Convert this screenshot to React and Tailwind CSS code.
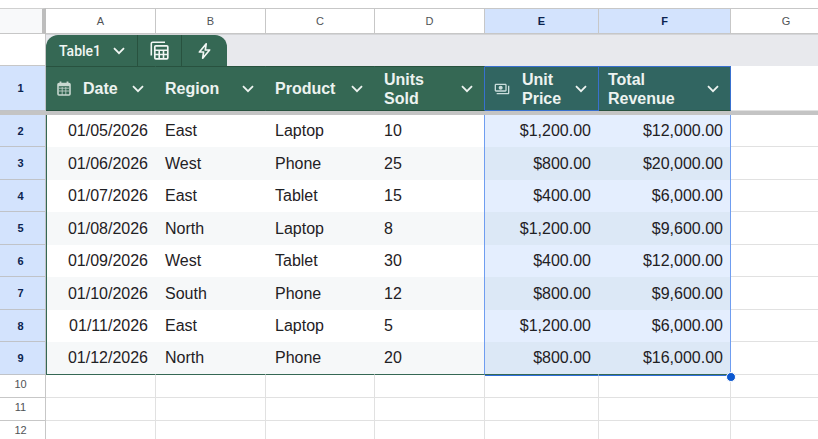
import React from 'react';
import { MdOutlinePayments } from 'react-icons/md';

const rows = [
  ['01/05/2026', 'East', 'Laptop', '10', '$1,200.00', '$12,000.00'],
  ['01/06/2026', 'West', 'Phone', '25', '$800.00', '$20,000.00'],
  ['01/07/2026', 'East', 'Tablet', '15', '$400.00', '$6,000.00'],
  ['01/08/2026', 'North', 'Laptop', '8', '$1,200.00', '$9,600.00'],
  ['01/09/2026', 'West', 'Tablet', '30', '$400.00', '$12,000.00'],
  ['01/10/2026', 'South', 'Phone', '12', '$800.00', '$9,600.00'],
  ['01/11/2026', 'East', 'Laptop', '5', '$1,200.00', '$6,000.00'],
  ['01/12/2026', 'North', 'Phone', '20', '$800.00', '$16,000.00'],
];

const letters = ['A', 'B', 'C', 'D', 'E', 'F', 'G'];
const emptyRows = [10, 11, 12];

const Chevron = () => (
  <svg viewBox="0 0 12 8" className="block h-2 w-3" fill="none" stroke="currentColor" strokeWidth="1.8">
    <path d="M1 1.2 6 6.2 11 1.2" />
  </svg>
);

const CalendarIcon = () => (
  <svg viewBox="0 0 14 15" className="h-[15px] w-3.5 shrink-0 text-[#c9d8d0]" fill="none" stroke="currentColor">
    <rect x="1" y="2.5" width="12" height="11.5" rx="1" strokeWidth="1.6" />
    <path d="M3.5 0.5v2.5M10.5 0.5v2.5" strokeWidth="1.8" />
    <path d="M1 4h12" strokeWidth="2.4" />
    <path d="M2 7.2h10M2 10h10M5.2 6v8M8.8 6v8" strokeWidth="0.8" />
  </svg>
);

const TableIcon = () => (
  <svg viewBox="0 0 19 19" className="h-[19px] w-[19px]" fill="none" stroke="currentColor">
    <path d="M1.3 14.5V2.6q0-1.3 1.3-1.3H15" strokeWidth="1.6" />
    <rect x="4.8" y="4.8" width="13" height="13" rx="1" strokeWidth="1.7" />
    <path d="M5 9.3h13M5 13.5h13M9.2 9.3v8.5M13.5 9.3v8.5" strokeWidth="1.6" />
  </svg>
);

const BoltIcon = () => (
  <svg viewBox="0 0 13 18" className="h-[18px] w-[13px]" fill="none" stroke="currentColor" strokeWidth="1.7" strokeLinejoin="round">
    <path d="M8.2 1.8 1.4 10h4.2l-.9 6.2L11.6 8H7.3z" />
  </svg>
);

const columns = [
  {
    label: 'Date',
    icon: <CalendarIcon />,
    look: 'border-t-[#28523f] border-r-transparent border-b-[#28523f] bg-[#356854]',
    inner: 'gap-3 pl-[11px]',
  },
  { label: 'Region', look: 'border-t-[#28523f] border-r-transparent border-b-[#28523f] bg-[#356854]', inner: 'pl-[9px]' },
  { label: 'Product', look: 'border-t-[#28523f] border-r-transparent border-b-[#28523f] bg-[#356854]', inner: 'pl-[9px]' },
  { label: 'Units Sold', look: 'border-t-[#28523f] border-r-[#3870cf] border-b-[#28523f] bg-[#356854]', inner: 'pl-[9px]' },
  {
    label: 'Unit Price',
    icon: <MdOutlinePayments className="h-4 w-4 shrink-0 text-[#c9dcdb]" />,
    look: 'border-t-[#3870cf] border-r-[#3870cf] border-b-[#3870cf] bg-[#316561]',
    inner: 'gap-3 pl-[9px]',
  },
  { label: 'Total Revenue', look: 'border-t-[#3870cf] border-r-[#3870cf] border-b-[#28523f] bg-[#316561]', inner: 'pl-[9px]' },
];

// borders and alignment of the data cells, one entry per column
const cellLook = [
  'border-r border-r-transparent border-l border-l-[#356854] pr-[7px] text-right',
  'border-r border-r-transparent pl-[9px]',
  'border-r border-r-transparent pl-[9px]',
  'border-r border-r-[#6f9df0] pl-[9px]',
  'border-r border-r-transparent pr-[7px] text-right',
  'border-r border-r-[#6f9df0] pr-[7px] text-right',
];

const cellBg = (row, col) => {
  if (col > 3) return row % 2 ? 'bg-[#dce8f6]' : 'bg-[#e4eefe]';
  return row % 2 ? 'bg-[#f6f8f9]' : 'bg-white';
};

const RowHeader = ({ n, selected }) => (
  <th
    scope="row"
    className={
      selected
        ? 'border-r border-b border-[#c0c3c8] bg-[#d3e3fd] py-0 pr-1 pl-0 text-[11px] leading-4 font-bold text-[#0b2450]'
        : 'border-r border-b border-[#c7c7c7] bg-white pt-0 pr-1 pb-1 pl-0 text-[11px] leading-4 font-normal text-[#505356]'
    }
  >
    {n}
  </th>
);

export default function App() {
  return (
    <div className="h-screen overflow-hidden bg-white pt-2 font-['Liberation_Sans',Arial,sans-serif] text-[#1f2124]">
      <table className="w-full min-w-[842px] table-fixed border-separate border-spacing-0">
        <colgroup>
          <col className="w-[46px]" />
          <col className="w-[110px]" />
          <col className="w-[110px]" />
          <col className="w-[109px]" />
          <col className="w-[110px]" />
          <col className="w-[114px]" />
          <col className="w-[132px]" />
          <col />
        </colgroup>
        <thead>
          <tr className="h-[26px] text-[11px] leading-4">
            <td className="border-t border-r-4 border-b border-t-[#d0d0d0] border-r-[#bdbdbd] border-b-[#c7c7c7] bg-[#f8f9fa]" />
            {letters.map((letter) => {
              const selected = letter === 'E' || letter === 'F';
              return (
                <th
                  key={letter}
                  scope="col"
                  className={
                    selected
                      ? 'border-t border-r border-b border-[#c7c7c7] bg-[#d3e3fd] font-bold text-[#0b2450]'
                      : 'border-t border-r border-b border-[#c7c7c7] font-normal text-[#505356]'
                  }
                >
                  {letter}
                </th>
              );
            })}
          </tr>
          <tr className="h-8">
            <td className="border-r border-b border-[#c7c7c7] bg-white" />
            <td colSpan={7} className="border-t border-t-[#d4d5d8] bg-[#e8e9ed] p-0">
              <div className="flex h-[31px] w-[181px] overflow-hidden rounded-t-xl bg-[#356854] text-[#f1f6f3]">
                <button className="flex w-[92px] items-center justify-between border-r border-[#28523f] pr-3 pl-[13px] font-['Roboto',sans-serif] text-sm font-medium">
                  Table1
                  <Chevron />
                </button>
                <button aria-label="Table views" className="flex w-11 items-center justify-center border-r border-[#28523f]">
                  <TableIcon />
                </button>
                <button aria-label="Table actions" className="flex flex-1 items-center justify-center">
                  <BoltIcon />
                </button>
              </div>
            </td>
          </tr>
          <tr className="h-[45px]">
            <RowHeader n={1} selected />
            {columns.map(({ label, icon, look, inner }) => (
              <th
                key={label}
                scope="col"
                className={`border-t border-r border-b p-0 text-left text-[16px] leading-[19px] font-bold text-[#edf3f0] ${look}`}
              >
                <div className={`flex items-center pr-[11px] ${inner}`}>
                  {icon}
                  <span className="flex-1">{label}</span>
                  <button aria-label={`${label} options`} className="shrink-0">
                    <Chevron />
                  </button>
                </div>
              </th>
            ))}
            <td className="border-b border-[#e1e1e1]" />
          </tr>
          <tr className="h-1">
            <td colSpan={8} className="bg-[#c4c4c4] p-0" />
          </tr>
        </thead>
        <tbody>
          {rows.map((row, r) => {
            const last = r === rows.length - 1;
            return (
              <tr key={row[0]} className={r % 2 ? 'h-[33px]' : 'h-8'}>
                <RowHeader n={r + 2} selected />
                {row.map((value, c) => (
                  <td
                    key={c}
                    className={`py-0 text-[16px] leading-5 ${cellLook[c]} ${cellBg(r, c)} ${
                      last ? 'border-b border-b-[#356854]' : ''
                    }`}
                  >
                    {value}
                  </td>
                ))}
                <td className="border-r border-b border-[#e1e1e1]" />
              </tr>
            );
          })}
          {emptyRows.map((n, i) => (
            <tr key={n} className="h-[23px]">
              <RowHeader n={n} />
              {letters.map((letter) => (
                <td
                  key={letter}
                  className={`relative border-r border-b border-r-[#e1e1e1] border-b-[#e1e1e1] ${
                    i === 0 && (letter === 'E' || letter === 'F') ? 'border-t border-t-[#2f6fdc]' : ''
                  }`}
                >
                  {i === 0 && letter === 'F' && (
                    <span className="absolute -top-1 -right-[6px] z-10 h-2.5 w-2.5 rounded-full border border-white bg-[#0b57d0]" />
                  )}
                </td>
              ))}
            </tr>
          ))}
        </tbody>
      </table>
    </div>
  );
}
